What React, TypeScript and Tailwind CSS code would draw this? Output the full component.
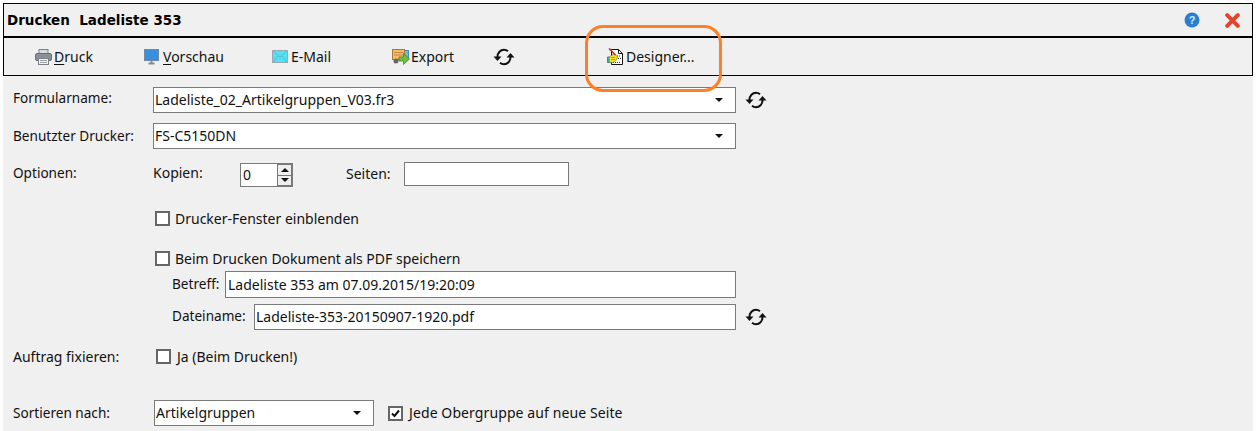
import type { ReactNode } from "react";

function Sync({ className = "" }: { className?: string }) {
  return (
    <svg width="22" height="20" viewBox="0 0 22 20" fill="none" className={className}>
      <path d="M4.500 10 C4.500 5.500 7.500 2.800 11 2.800 C12.500 2.800 13.800 3.200 15 4.200" stroke="#111" strokeWidth="2" />
      <path d="M17.500 10 C17.500 14.500 14.500 17.200 11 17.200 C9.500 17.200 8.200 16.800 7 15.800" stroke="#111" strokeWidth="2" />
      <path d="M0.500 9.500 H8.500 L4.500 14 Z" fill="#111" />
      <path d="M13.500 10.500 H21.500 L17.500 6 Z" fill="#111" />
    </svg>
  );
}

function PrinterIcon() {
  return (
    <svg width="17" height="16" viewBox="0 0 17 16">
      <rect x="4" y="0.500" width="9" height="5" fill="#d8dce0" stroke="#7d8288" />
      <rect x="0.500" y="4.500" width="16" height="7" rx="1.500" fill="#8c9096" stroke="#6a6e73" />
      <rect x="3.500" y="9.500" width="10" height="6" fill="#f2f3f4" stroke="#7d8288" />
      <path d="M5 11.500H12M5 13.500H12" stroke="#9aa0a6" />
    </svg>
  );
}

function MonitorIcon() {
  return (
    <svg width="15" height="16" viewBox="0 0 15 16">
      <rect x="0.500" y="0.500" width="14" height="11" fill="#3a8fdc" stroke="#7089a3" />
      <path d="M4.500 14.500H10.500" stroke="#7d8a96" strokeWidth="2" />
      <path d="M6.500 12H8.500V14H6.500Z" fill="#8a949e" />
    </svg>
  );
}

function MailIcon() {
  return (
    <svg width="16" height="13" viewBox="0 0 16 13">
      <rect x="0.500" y="0.500" width="15" height="12" fill="#49e6f6" stroke="#9aa8b4" />
      <path d="M1 1L8 7L15 1M1 12L6 6M15 12L10 6" fill="none" stroke="#7fa6c8" />
    </svg>
  );
}

function ExportIcon() {
  return (
    <svg width="18" height="16" viewBox="0 0 18 16">
      <rect x="10.500" y="1.500" width="6" height="8" fill="#6cb6ea" stroke="#4a8cc0" />
      <rect x="0.500" y="0.500" width="12" height="10" fill="#f3bd6c" stroke="#a87838" />
      <path d="M2 3.500H11M2 6H11" stroke="#c48a3c" />
      <circle cx="4" cy="12" r="2.500" fill="#666" />
      <path d="M7 8H11.500V4.500L17.500 10L11.500 15.500V12H7Z" fill="#6cc03a" stroke="#3d7f22" strokeWidth="0.700" />
    </svg>
  );
}

function DesignerIcon() {
  return (
    <svg width="16" height="17" viewBox="0 0 16 17">
      <path d="M4.500 1.500H11.500L15.500 5.500V16.500H4.500Z" fill="#fff" stroke="#111" />
      <path d="M11.500 1.500V5.500H15.500" fill="none" stroke="#111" />
      <path d="M10 8H14M11 10.500H14M6 14.500H14" stroke="#333" strokeDasharray="1 1" />
      <path d="M0.500 14.500V9H3V14.500Z" fill="#2bb7c4" stroke="#156" strokeWidth="0.600" />
      <path d="M2 9L7 6L10.500 8.500L9.500 12L6 14.500H2.500Z" fill="#f6e51c" stroke="#857c10" strokeWidth="0.700" />
      <path d="M2 0.500L8.500 7" stroke="#c8281e" strokeWidth="1.600" />
      <path d="M4 9.500H8M4 11.500H8" stroke="#a89c10" />
    </svg>
  );
}

function HelpIcon() {
  return (
    <svg width="16" height="16" viewBox="0 0 16 16">
      <circle cx="8" cy="8" r="7.500" fill="#2a7dd0" />
      <text x="8" y="12" textAnchor="middle" fontSize="11" fontWeight="700" fill="#d5e8fa" fontFamily="Liberation Sans, sans-serif">?</text>
    </svg>
  );
}

function CloseIcon() {
  return (
    <svg width="15" height="15" viewBox="0 0 15 15">
      <path d="M2.200 2.200L12.800 12.800M12.800 2.200L2.200 12.800" stroke="#e2452c" strokeWidth="4" strokeLinecap="round" />
    </svg>
  );
}

function ToolButton({ icon, label, u, className }: { icon: ReactNode; label: string; u?: string; className: string }) {
  return (
    <div className={`flex items-center shrink-0 ${className}`}>
      <span className="flex w-[19px] shrink-0 items-center">{icon}</span>
      <span>
        {u && <span className="underline underline-offset-2">{u}</span>}
        {label}
      </span>
    </div>
  );
}

function Box({ children, className }: { children?: ReactNode; className: string }) {
  return (
    <div className={`flex items-center justify-between bg-white border border-[#7a7a7a] pl-[1px] shrink-0 ${className}`}>
      {children}
    </div>
  );
}

function Caret() {
  return <span className="mr-[12px] h-0 w-0 border-x-[4px] border-t-[4px] border-x-transparent border-t-[#111]" />;
}

function Check({ checked, className = "" }: { checked?: boolean; className?: string }) {
  return (
    <span className={`flex h-[15px] w-[15px] shrink-0 items-center justify-center border-2 border-[#666] bg-white ${className}`}>
      {checked && (
        <svg width="9" height="9" viewBox="0 0 9 9">
          <path d="M1 4.500L3.500 7L8 1.500" fill="none" stroke="#111" strokeWidth="2" />
        </svg>
      )}
    </span>
  );
}

export default function App() {
  return (
    <div className="relative h-[431px] w-[1256px] overflow-hidden bg-white pl-[3px] pr-[3px] pt-[3px] font-['Noto_Sans',sans-serif] text-[14px] leading-[20px] text-[#111]">
      <div className="h-[428px] w-[1250px] bg-[#f0f0f0]">
        <div className="flex h-[33px] items-center justify-between border-x border-t border-black pl-[3px] pr-[12px]">
          <span className="font-['DejaVu_Sans',sans-serif] text-[13.5px] font-bold text-black whitespace-pre">Drucken  Ladeliste 353</span>
          <div className="flex items-center gap-[25px]">
            <HelpIcon />
            <CloseIcon />
          </div>
        </div>
        <div className="flex h-[40px] items-center border-x border-b border-t-2 border-black">
          <ToolButton className="ml-[31px] w-[109px]" icon={<PrinterIcon />} u="D" label="ruck" />
          <ToolButton className="w-[128px]" icon={<MonitorIcon />} u="V" label="orschau" />
          <ToolButton className="w-[120px]" icon={<MailIcon />} label="E-Mail" />
          <ToolButton className="w-[101px]" icon={<ExportIcon />} label="Export" />
          <Sync className="shrink-0" />
          <ToolButton className="ml-[92px]" icon={<DesignerIcon />} label="Designer..." />
        </div>

        <div className="pl-[10px] pt-[11px]">
          <div className="flex h-[26px]">
            <span className="w-[140px] shrink-0 pt-[1px] text-[13.6px]">Formularname:</span>
            <Box className="h-[26px] w-[583px]"><span>Ladeliste_02_Artikelgruppen_V03.fr3</span><Caret /></Box>
            <Sync className="ml-[9px] mt-[3px]" />
          </div>
          <div className="mt-[10px] flex h-[26px]">
            <span className="w-[140px] shrink-0 pt-[3px] text-[13.6px]">Benutzter Drucker:</span>
            <Box className="h-[26px] w-[583px]"><span>FS-C5150DN</span><Caret /></Box>
          </div>
          <div className="mt-[13px] flex h-[24px]">
            <span className="w-[140px] shrink-0 pt-[1px] text-[13.6px]">Optionen:</span>
            <span className="w-[87px] shrink-0 pt-[1px]">Kopien:</span>
            <div className="mt-[1px] flex h-[24px] w-[53px] shrink-0 border border-[#7a7a7a] bg-white pl-[2px]">
              <span className="flex-1 pt-[1px]">0</span>
              <div className="flex w-[15px] flex-col gap-px bg-[#777] p-px">
                <span className="flex flex-1 items-center justify-center bg-[#eee]"><span className="h-0 w-0 border-x-[4px] border-b-[4px] border-x-transparent border-b-[#111]" /></span>
                <span className="flex flex-1 items-center justify-center bg-[#eee]"><span className="h-0 w-0 border-x-[4px] border-t-[4px] border-x-transparent border-t-[#111]" /></span>
              </div>
            </div>
            <span className="ml-[53px] w-[58px] shrink-0 pt-[2px]">Seiten:</span>
            <Box className="h-[24px] w-[165px]" />
          </div>
          <div className="mt-[25px] flex h-[15px] items-center pl-[142px]">
            <Check />
            <span className="ml-[5px]">Drucker-Fenster einblenden</span>
          </div>
          <div className="mt-[25px] flex h-[15px] items-center pl-[142px]">
            <Check />
            <span className="ml-[5px]">Beim Drucken Dokument als PDF speichern</span>
          </div>
          <div className="mt-[5px] flex h-[27px] pl-[159px]">
            <span className="w-[53px] shrink-0 pt-[3px] text-[13.6px]">Betreff:</span>
            <Box className="h-[27px] w-[511px] pl-[2px]"><span>Ladeliste 353 am 07.09.2015/19:20:09</span></Box>
          </div>
          <div className="mt-[6px] flex h-[26px] pl-[159px]">
            <span className="w-[82px] shrink-0 pt-[2px] text-[13.6px]">Dateiname:</span>
            <Box className="h-[26px] w-[482px]"><span>Ladeliste-353-20150907-1920.pdf</span></Box>
            <Sync className="ml-[9px] mt-[3px]" />
          </div>
          <div className="mt-[19px] flex h-[15px] items-center">
            <span className="w-[143px] shrink-0">Auftrag fixieren:</span>
            <Check />
            <span className="ml-[6px]">Ja (Beim Drucken!)</span>
          </div>
          <div className="mt-[36px] flex h-[26px] items-center">
            <span className="w-[141px] shrink-0 text-[13.6px]">Sortieren nach:</span>
            <Box className="h-[26px] w-[220px]"><span>Artikelgruppen</span><Caret /></Box>
            <Check checked className="ml-[14px]" />
            <span className="ml-[6px] tracking-[0.1px]">Jede Obergruppe auf neue Seite</span>
          </div>
        </div>
      </div>

      <div className="absolute left-[585px] top-[25px] h-[67px] w-[137px] rounded-[18px] border-[3px] border-[#ff7f27]" />
    </div>
  );
}
